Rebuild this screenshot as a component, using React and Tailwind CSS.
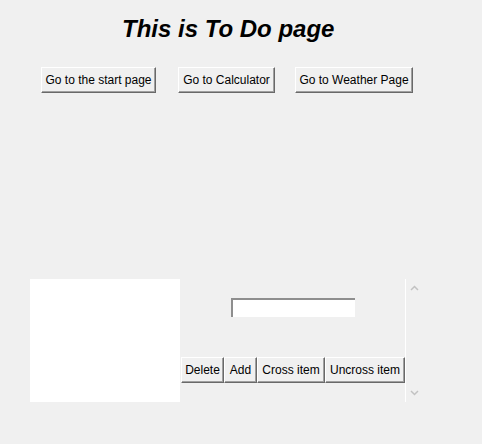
import React from 'react'

const font = { fontFamily: '"Liberation Sans", Arial, sans-serif' }

function TkButton({ label, w }) {
  return (
    <button
      className={`${w} h-[26px] shrink-0 bg-[#f0f0f0] text-[12px] text-black leading-none border border-t-white border-l-white border-r-[#696969] border-b-[#696969] shadow-[inset_-1px_-1px_0_#a0a0a0] flex items-center justify-center`}
    >
      {label}
    </button>
  )
}

function Chevron({ up }) {
  return (
    <svg width="9" height="6" viewBox="0 0 9 6">
      <path
        d={up ? 'M1 5 L4.5 1.5 L8 5' : 'M1 1 L4.5 4.5 L8 1'}
        fill="none"
        stroke="#c2c2c2"
        strokeWidth="1.5"
      />
    </svg>
  )
}

export default function App() {
  return (
    <div className="w-[482px] h-[444px] bg-[#f0f0f0] overflow-hidden" style={font}>
      <div className="pt-[17px] pl-[122px]">
        <h1 className="text-[24px] leading-[24px] font-bold italic text-black">This is To Do page</h1>
      </div>

      <div className="flex mt-[26px] pl-[41px]">
        <TkButton label="Go to the start page" w="w-[115px]" />
        <div className="w-[22px]" />
        <TkButton label="Go to Calculator" w="w-[97px]" />
        <div className="w-[20px]" />
        <TkButton label="Go to Weather Page" w="w-[118px]" />
      </div>

      <div className="flex mt-[186px] pl-[30px]">
        <div className="w-[150px] h-[123px] bg-white" />
        <div className="w-[225px] flex flex-col items-center pl-[1px]">
          <input
            className="mt-[19px] w-[124px] h-[19px] bg-white border-t-2 border-l-2 border-t-[#8e8e8e] border-l-[#8e8e8e] outline-none"
          />
          <div className="flex mt-[40px]">
            <TkButton label="Delete" w="w-[43px]" />
            <TkButton label="Add" w="w-[33px]" />
            <TkButton label="Cross item" w="w-[68px]" />
            <TkButton label="Uncross item" w="w-[80px]" />
          </div>
        </div>
        <div className="w-[16px] h-[123px] border-l border-white flex flex-col items-center justify-between pt-[6px] pb-[6px] pl-[1px]">
          <Chevron up />
          <Chevron />
        </div>
      </div>
    </div>
  )
}
